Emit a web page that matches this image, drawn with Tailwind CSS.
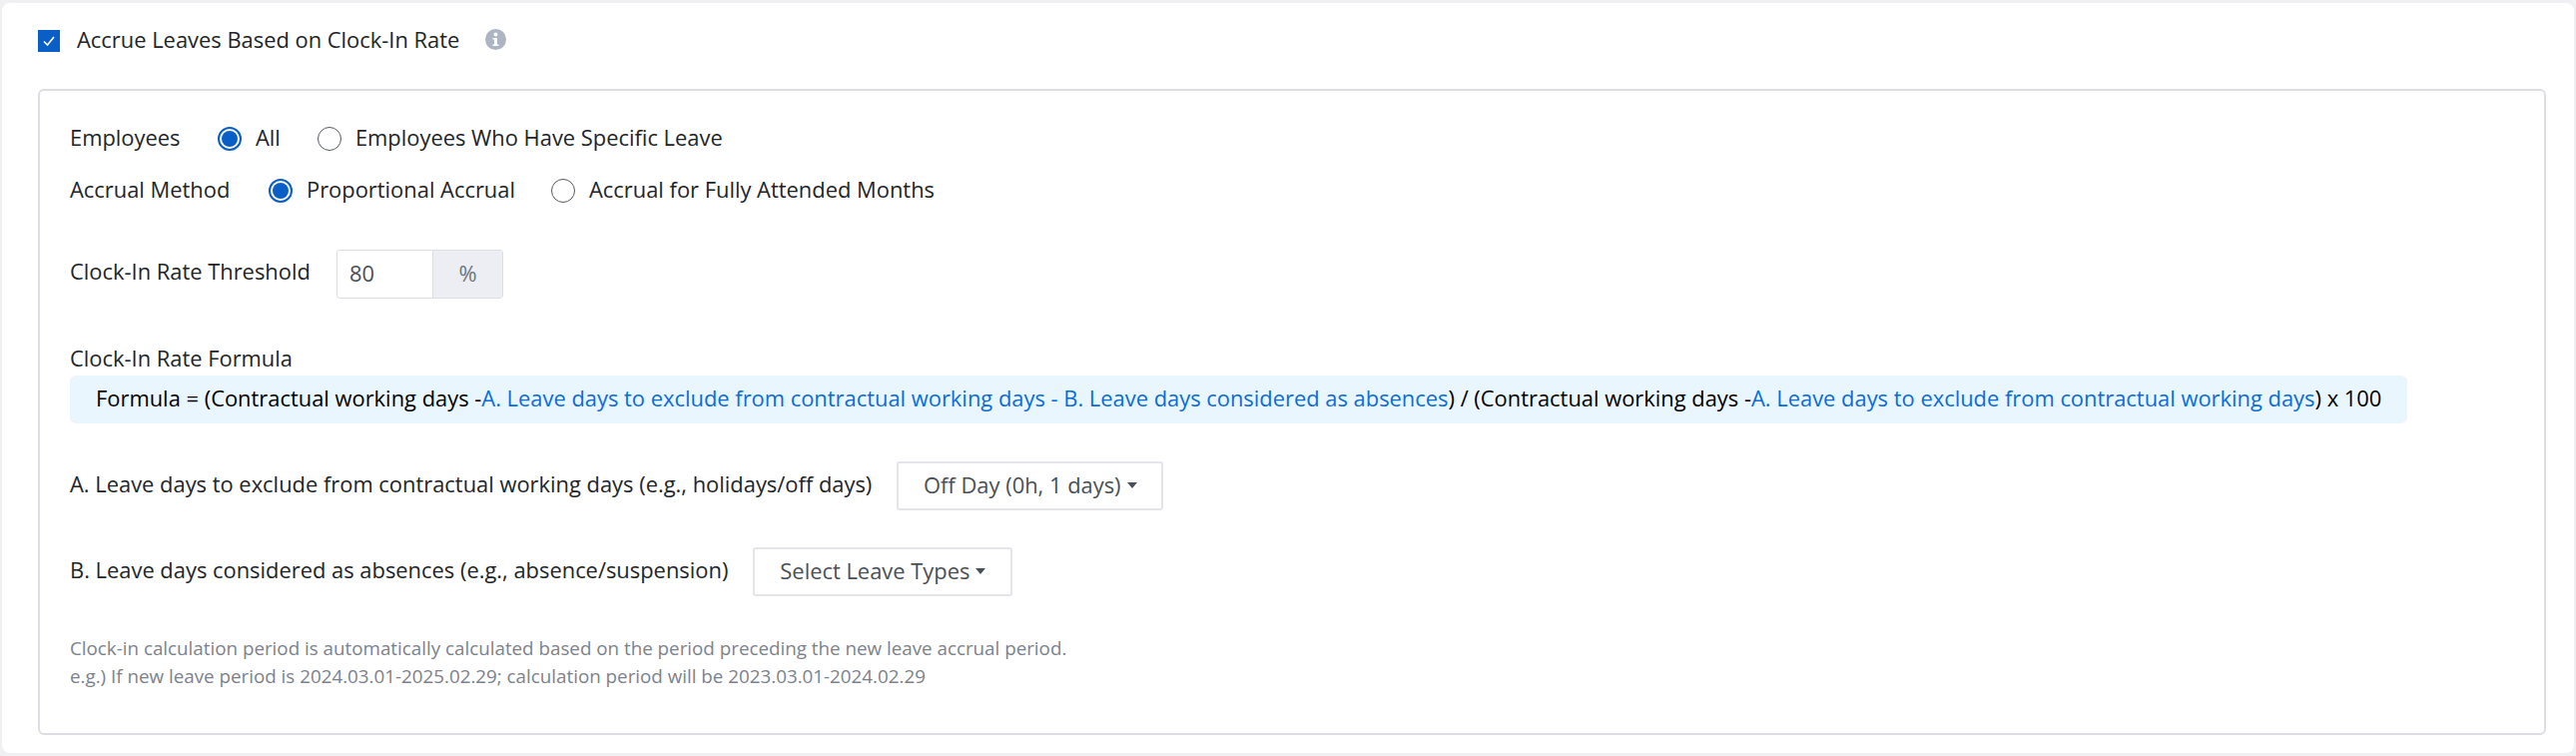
<!DOCTYPE html>
<html lang="en">
<head>
  <meta charset="UTF-8">
  <title>Accrue Leaves</title>
  <script src="https://cdn.jsdelivr.net/npm/@tailwindcss/browser@4"></script>
</head>
<body class="bg-[#f0f0f2] font-['Open_Sans',sans-serif] text-[21.9px] text-[#212529]">
  <!-- Outer card -->
  <div class="mx-[2px] mt-[3px] h-[751px] rounded-[8px] bg-white pl-[36px] pr-[28px] pt-[27px]">
    <div class="flex h-[22px] items-center">
      <span class="flex h-[22px] w-[22px] items-center justify-center bg-[#0a5fc7]">
        <svg width="14" height="14" viewBox="0 0 14 14" fill="none" stroke="white" stroke-width="1.6"><path d="M2 7.5 L5.5 11 L12 3"/></svg>
      </span>
      <span class="ml-[17px] -mt-[3px] leading-[22px]">Accrue Leaves Based on Clock-In Rate</span>
      <svg class="ml-[26px] -mt-[3px]" width="21" height="21" viewBox="0 0 21 21"><circle cx="10.5" cy="10.5" r="10.5" fill="#aeb5c2"/><circle cx="10.5" cy="5.5" r="2" fill="white"/><path d="M7.5 9h4.500v6.500h1.500v1.500h-6v-1.500h1.500v-5h-1.500z" fill="white"/></svg>
    </div>

    <!-- Inner card -->
    <div class="mt-[37px] h-[647px] rounded-[6px] border-2 border-[#dcdee4] pl-[30px] pt-[29px]">
      <div class="flex h-[36px] items-center">
        <span class="w-[148px]">Employees</span>
        <span class="mt-[2px] h-[24px] w-[24px] rounded-full border-2 border-[#0a5fc7] bg-white p-[2px]"><span class="block h-full w-full rounded-full bg-[#0a5fc7]"></span></span>
        <span class="ml-[14px]">All</span>
        <span class="ml-[37px] mt-[2px] h-[24px] w-[24px] rounded-full border border-[#55595f] bg-white"></span>
        <span class="ml-[14px]">Employees Who Have Specific Leave</span>
      </div>
      <div class="mt-[16px] flex h-[36px] items-center">
        <span class="w-[199px]">Accrual Method</span>
        <span class="mt-[2px] h-[24px] w-[24px] rounded-full border-2 border-[#0a5fc7] bg-white p-[2px]"><span class="block h-full w-full rounded-full bg-[#0a5fc7]"></span></span>
        <span class="ml-[14px]">Proportional Accrual</span>
        <span class="ml-[36px] mt-[2px] h-[24px] w-[24px] rounded-full border border-[#55595f] bg-white"></span>
        <span class="ml-[14px]">Accrual for Fully Attended Months</span>
      </div>

      <div class="mt-[42px] flex items-center">
        <span class="-mt-[5px] w-[267px]">Clock-In Rate Threshold</span>
        <div class="flex h-[49px] w-[167px] rounded-[3px] border border-[#dcdee4]">
          <span class="flex w-[95px] items-center pl-[12px] text-[#495057]">80</span>
          <span class="flex flex-1 items-center justify-center border-l border-[#dcdee4] bg-[#eceef3] text-[#6c757d]">%</span>
        </div>
      </div>

      <div class="mt-[46px] leading-[27px]">Clock-In Rate Formula</div>
      <div class="mt-[4px] flex h-[48px] w-[2341px] items-center rounded-[6px] bg-[#eaf6fe] pl-[26px] text-black">
        <span class="-mt-[1px]">Formula = (Contractual working days -<span class="text-[#096dd9]">A. Leave days to exclude from contractual working days - B. Leave days considered as absences</span>) / (Contractual working days -<span class="text-[#096dd9]">A. Leave days to exclude from contractual working days</span>) x 100</span>
      </div>

      <div class="mt-[38px] flex items-center">
        <span class="-mt-[3px]">A. Leave days to exclude from contractual working days (e.g., holidays/off days)</span>
        <button class="ml-[25px] flex h-[49px] w-[267px] items-center justify-center rounded-[3px] border-2 border-[#e3e5ea] text-[#495057]">Off Day (0h, 1 days)<span class="ml-[6px] -mt-[1px] h-0 w-0 border-x-[5px] border-t-[6px] border-x-transparent border-t-[#495057]"></span></button>
      </div>
      <div class="mt-[37px] flex items-center">
        <span class="-mt-[3px]">B. Leave days considered as absences (e.g., absence/suspension)</span>
        <button class="ml-[25px] flex h-[49px] w-[260px] items-center justify-center rounded-[3px] border-2 border-[#e3e5ea] text-[#495057]">Select Leave Types<span class="ml-[6px] -mt-[1px] h-0 w-0 border-x-[5px] border-t-[6px] border-x-transparent border-t-[#495057]"></span></button>
      </div>

      <p class="mt-[38px] text-[18.8px] leading-[28px] text-[#7c828c]">Clock-in calculation period is automatically calculated based on the period preceding the new leave accrual period.<br>e.g.) If new leave period is 2024.03.01-2025.02.29; calculation period will be 2023.03.01-2024.02.29</p>
    </div>
  </div>
</body>
</html>
